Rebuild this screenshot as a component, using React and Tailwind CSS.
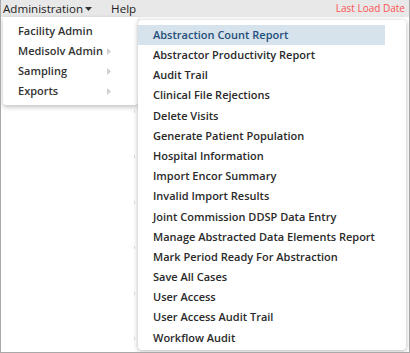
import { useState } from 'react';

const adminItems = [
  { label: 'Facility Admin', sub: false },
  { label: 'Medisolv Admin', sub: true },
  { label: 'Sampling', sub: true },
  { label: 'Exports', sub: true },
];

const reportItems = [
  'Abstraction Count Report',
  'Abstractor Productivity Report',
  'Audit Trail',
  'Clinical File Rejections',
  'Delete Visits',
  'Generate Patient Population',
  'Hospital Information',
  'Import Encor Summary',
  'Invalid Import Results',
  'Joint Commission DDSP Data Entry',
  'Manage Abstracted Data Elements Report',
  'Mark Period Ready For Abstraction',
  'Save All Cases',
  'User Access',
  'User Access Audit Trail',
  'Workflow Audit',
];

function SubArrow() {
  return (
    <svg width="4" height="7" viewBox="0 0 4 7" className="ml-auto mr-[27px] shrink-0">
      <path d="M0 0 L4 3.5 L0 7 Z" fill="#d0d0d0" />
    </svg>
  );
}

export default function App() {
  const [active] = useState(0);

  return (
    <div
      className="relative w-[410px] h-[353px] bg-white border-l border-r border-b border-[#a9a9a9] overflow-hidden"
      style={{ fontFamily: '"Open Sans", "Noto Sans", sans-serif' }}
    >
      {/* top menu bar */}
      <div className="flex items-center h-[17px] bg-[#e8e8e8] text-[11.6px] text-[#222] whitespace-nowrap">
        <div className="flex items-center pl-[2px]">
          <span className="font-medium">Administration</span>
          <svg width="7" height="4" viewBox="0 0 7 4" className="ml-[2px] mt-[1px]">
            <path d="M0 0 L7 0 L3.5 4 Z" fill="#333" />
          </svg>
        </div>
        <span className="ml-[19px] font-medium">Help</span>
        <span className="ml-auto mr-[4px] text-[10px] text-[#ff5252]">Last Load Date</span>
      </div>

      {/* faint background table lines */}
      <div className="absolute left-[133px] top-[110px] w-px h-[230px] flex flex-col justify-between">
        <div className="h-[3px] bg-[#ddd]" />
        <div className="h-[3px] bg-[#ddd]" />
        <div className="h-[3px] bg-[#ddd]" />
        <div className="h-[3px] bg-[#ddd]" />
        <div className="h-[3px] bg-[#ddd]" />
        <div className="h-[3px] bg-[#ddd]" />
      </div>

      {/* first level dropdown */}
      <div className="absolute left-[2px] top-[17px] w-[135px] bg-white rounded-b-[3px] shadow-[0_2px_5px_rgba(0,0,0,0.25)] py-[4px] z-10">
        {adminItems.map((item) => (
          <div
            key={item.label}
            className="flex items-center h-[20px] pl-[15px] text-[11px] font-semibold text-[#333] whitespace-nowrap"
          >
            <span>{item.label}</span>
            {item.sub && <SubArrow />}
          </div>
        ))}
      </div>

      {/* second level dropdown */}
      <div className="absolute left-[137px] top-[20px] w-[268px] h-[330px] bg-white rounded-[4px] shadow-[0_1px_5px_rgba(0,0,0,0.3)] pt-[5px] z-20">
        {reportItems.map((label, i) => (
          <div
            key={label}
            className={
              i === active
                ? 'flex items-center h-[20.2px] mr-[21px] pl-[15px] text-[11px] font-semibold whitespace-nowrap bg-[#d6e2ec] text-[#1f4f7a]'
                : 'flex items-center h-[20.2px] mr-[21px] pl-[15px] text-[11px] font-semibold whitespace-nowrap text-[#2a2a2a]'
            }
          >
            {label}
          </div>
        ))}
      </div>
    </div>
  );
}
